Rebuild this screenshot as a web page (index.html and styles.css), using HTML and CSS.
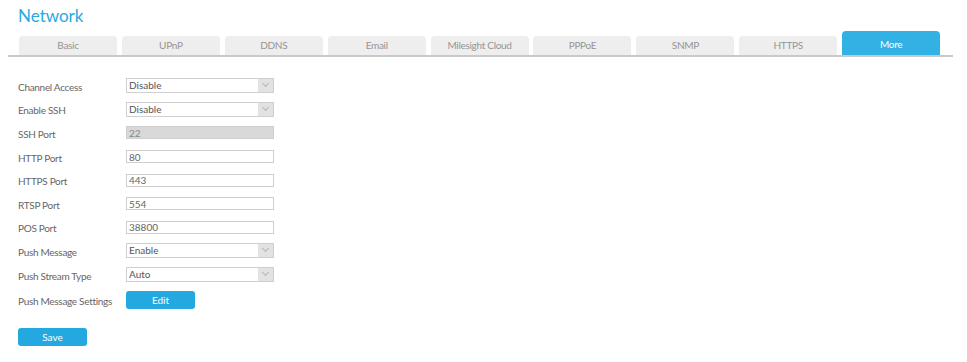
FILE: index.html
```html
<!DOCTYPE html>
<html lang="en">
<head>
    <meta charset="UTF-8">
    <meta name="viewport" content="width=device-width, initial-scale=1.0">
    <title>Network</title>
    <link rel="stylesheet" href="styles.css">
</head>
<body>
    <div class="page">
        <h1 class="title">Network</h1>

        <div class="tabs">
            <div class="tab">Basic</div>
            <div class="tab">UPnP</div>
            <div class="tab">DDNS</div>
            <div class="tab">Email</div>
            <div class="tab">Milesight Cloud</div>
            <div class="tab">PPPoE</div>
            <div class="tab">SNMP</div>
            <div class="tab">HTTPS</div>
            <div class="tab active">More</div>
        </div>

        <div class="form">
            <div class="row">
                <label>Channel Access</label>
                <div class="select"><span>Disable</span><i class="arrow"></i></div>
            </div>
            <div class="row">
                <label>Enable SSH</label>
                <div class="select"><span>Disable</span><i class="arrow"></i></div>
            </div>
            <div class="row">
                <label>SSH Port</label>
                <input type="text" class="input-box" value="22" disabled>
            </div>
            <div class="row">
                <label>HTTP Port</label>
                <input type="text" class="input-box" value="80">
            </div>
            <div class="row">
                <label>HTTPS Port</label>
                <input type="text" class="input-box" value="443">
            </div>
            <div class="row">
                <label>RTSP Port</label>
                <input type="text" class="input-box" value="554">
            </div>
            <div class="row">
                <label>POS Port</label>
                <input type="text" class="input-box" value="38800">
            </div>
            <div class="row">
                <label>Push Message</label>
                <div class="select"><span>Enable</span><i class="arrow"></i></div>
            </div>
            <div class="row">
                <label>Push Stream Type</label>
                <div class="select"><span>Auto</span><i class="arrow"></i></div>
            </div>
            <div class="row row-btn">
                <label>Push Message Settings</label>
                <button class="btn">Edit</button>
            </div>
        </div>

        <button class="btn save-btn">Save</button>
    </div>
</body>
</html>
```

FILE: styles.css
```css
body { margin: 0; font-family: Lato, "Open Sans", sans-serif; background: #ffffff; color: #666666; }
.page { padding: 0 14px 0 8px; }
.title { margin: 0; padding: 6px 0 0 10px; height: 27px; font-size: 17px; font-weight: normal; color: #28a9e1; line-height: 20px; }

.tabs { display: flex; align-items: flex-end; gap: 4.9px; padding-left: 11px; border-bottom: 2px solid #c9c9c9; height: 22px; }
.tab { width: 98px; height: 19px; line-height: 19px; background: #eeeeee; border-radius: 4px 4px 0 0; text-align: center; font-size: 10px; letter-spacing: -0.3px; color: #959595; }
.tab.active { height: 24px; line-height: 26px; background: #31b1e4; color: #ffffff; }

.form { padding: 17px 0 0 10px; }
.row { display: flex; align-items: center; height: 23.6px; }
.row label { width: 108px; font-size: 10px; letter-spacing: -0.3px; color: #666666; padding-top: 2px; }
.select { display: flex; width: 146px; height: 13px; border: 1px solid #cfcfcf; font-size: 10px; color: #555555; line-height: 13px; }
.select span { flex: 1; padding-left: 2px; }
.arrow { width: 15px; background: #e2e2e2; position: relative; }
.arrow::after { content: ""; position: absolute; left: 5px; top: 2px; width: 4px; height: 4px; border-right: 1px solid #b5b5b5; border-bottom: 1px solid #b5b5b5; transform: rotate(45deg); }
.input-box { box-sizing: border-box; width: 148px; height: 13px; margin: 0; padding: 0 2px; border: 1px solid #cfcfcf; font-family: inherit; font-size: 10px; color: #666666; outline: none; }
.input-box:disabled { background: #d9d9d9; color: #888888; }

.row-btn { height: 28px; }
.btn { width: 69px; height: 18px; padding: 0; border: none; border-radius: 3px; background: #23a9df; color: #ffffff; font-family: inherit; font-size: 10px; cursor: pointer; }
.save-btn { margin: 14px 0 0 10px; }
```
